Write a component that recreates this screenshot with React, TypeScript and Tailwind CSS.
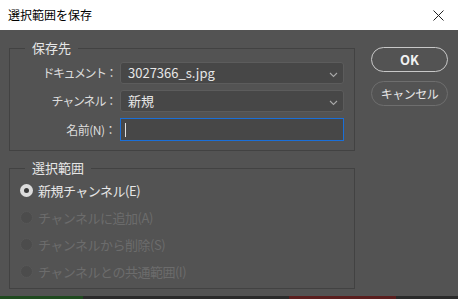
import React from "react";

const font = { fontFamily: '"Noto Sans CJK JP", "Noto Sans", sans-serif' };

function Chevron() {
  return (
    <svg width="9" height="6" viewBox="0 0 9 6" className="absolute right-[5px] top-[9px]">
      <path d="M1 1 L4.5 4.5 L8 1" fill="none" stroke="#a8a8a8" strokeWidth="1.1" />
    </svg>
  );
}

function Radio({ checked, disabled, label }: { checked?: boolean; disabled?: boolean; label: string }) {
  return (
    <div className="flex items-center h-[27px]">
      {checked ? (
        <div className="w-[13px] h-[13px] rounded-full bg-[#dcdcdc] flex items-center justify-center">
          <div className="w-[5px] h-[5px] rounded-full bg-[#3a3a3a]" />
        </div>
      ) : (
        <div className="w-[13px] h-[13px] rounded-full bg-[#4c4c4c] border border-[#575757]" />
      )}
      <span
        className={`ml-[5px] text-[13px] tracking-[-0.5px] ${disabled ? "text-[#6c6c6c]" : "text-[#e6e6e6]"}`}
      >
        {label}
      </span>
    </div>
  );
}

export default function App() {
  return (
    <div className="w-[458px] h-[299px] flex flex-col overflow-hidden" style={font}>
      <div className="h-[30px] bg-white flex items-center justify-between pl-[8px] pr-[14px]">
        <span className="text-[12px] text-black">選択範囲を保存</span>
        <svg width="11" height="11" viewBox="0 0 11 11">
          <path d="M0.5 0.5 L10.5 10.5 M10.5 0.5 L0.5 10.5" stroke="#222" strokeWidth="1" />
        </svg>
      </div>
      <div className="h-[266px] bg-[#535353] flex pl-[9px] pt-[18px]">
        <div className="flex flex-col w-[346px]">
          <div className="relative h-[103px] border border-[#424242] pt-[13px]">
            <span className="absolute left-[15px] top-[-10px] px-[7px] bg-[#535353] text-[13px] leading-[18px] text-[#e6e6e6]">
              保存先
            </span>
            <div className="flex flex-col gap-[6px]">
              <div className="flex items-center h-[22px]">
                <span className="w-[106px] text-right text-[12px] tracking-[-1.5px] text-[#dcdcdc]">ドキュメント：</span>
                <div className="relative ml-[4px] w-[224px] h-[22px] rounded-[3px] bg-[#474747] border border-[#5c5c5c] flex items-center pl-[7px]">
                  <span className="text-[13px] text-[#e6e6e6]">3027366_s.jpg</span>
                  <Chevron />
                </div>
              </div>
              <div className="flex items-center h-[22px]">
                <span className="w-[106px] text-right text-[12px] tracking-[-1.2px] text-[#dcdcdc]">チャンネル：</span>
                <div className="relative ml-[4px] w-[224px] h-[22px] rounded-[3px] bg-[#474747] border border-[#5c5c5c] flex items-center pl-[7px]">
                  <span className="text-[13px] text-[#e6e6e6]">新規</span>
                  <Chevron />
                </div>
              </div>
              <div className="flex items-center h-[23px]">
                <span className="w-[106px] text-right text-[12px] tracking-[-0.5px] text-[#dcdcdc]">名前(N)：</span>
                <div className="ml-[4px] w-[224px] h-[23px] bg-[#474747] border border-[#1a6fd8] flex items-center pl-[4px]">
                  <div className="w-[1px] h-[14px] bg-[#e0e0e0]" />
                </div>
              </div>
            </div>
          </div>
          <div className="relative mt-[17px] h-[121px] border border-[#424242] pt-[8px] pl-[10px]">
            <span className="absolute left-[15px] top-[-10px] px-[7px] bg-[#535353] text-[13px] leading-[18px] text-[#e6e6e6]">
              選択範囲
            </span>
            <Radio checked label="新規チャンネル(E)" />
            <Radio disabled label="チャンネルに追加(A)" />
            <Radio disabled label="チャンネルから削除(S)" />
            <Radio disabled label="チャンネルとの共通範囲(I)" />
          </div>
        </div>
        <div className="ml-[16px] flex flex-col gap-[9px] mt-[-1px]">
          <button className="w-[77px] h-[25px] rounded-full border-[1.5px] border-[#c8c8c8] text-[13px] font-semibold text-[#f0f0f0] flex items-center justify-center">
            OK
          </button>
          <button className="w-[77px] h-[25px] rounded-full border-[1.5px] border-[#6e6e6e] text-[12px] tracking-[-0.5px] text-[#e6e6e6] flex items-center justify-center">
            キャンセル
          </button>
        </div>
      </div>
      <div className="h-[3px] flex bg-[#2a2a2a]">
        <div className="w-[83px] bg-[#1f4a1f]" />
        <div className="w-[206px]" />
        <div className="w-[107px] bg-[#5a1e1e]" />
      </div>
    </div>
  );
}
